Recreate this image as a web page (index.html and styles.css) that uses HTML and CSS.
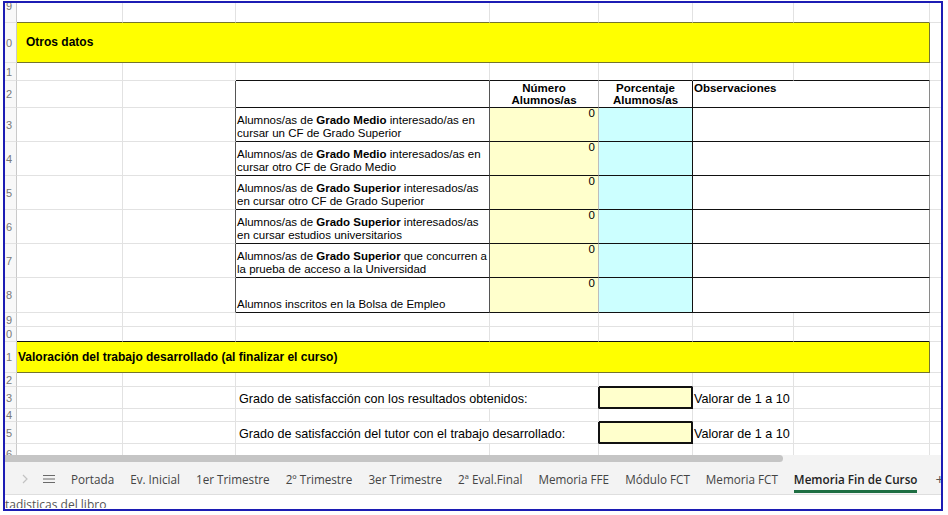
FILE: index.html
```html
<!DOCTYPE html>
<html>
<head>
    <meta charset="UTF-8">
    <title>Memoria Fin de Curso</title>
    <link rel="stylesheet" href="styles.css">
</head>
<body>
<div class="frame">
    <div class="sheet">
        <div class="row ht20">
            <div class="c h top">9</div>
            <div class="c bo"></div><div class="c bo"></div><div class="c bo"></div><div class="c bo"></div>
            <div class="c bo"></div><div class="c bo"></div><div class="c bo"></div><div class="c"></div>
        </div>
        <div class="row ht40">
            <div class="c h">0</div>
            <div class="c band one">Otros datos</div>
            <div class="c"></div>
        </div>
        <div class="row ht18">
            <div class="c h">1</div>
            <div class="c"></div><div class="c"></div><div class="c bk"></div><div class="c bk"></div>
            <div class="c bk"></div><div class="c bk"></div><div class="c bk"></div><div class="c"></div>
        </div>
        <div class="row ht27">
            <div class="c h">2</div>
            <div class="c"></div><div class="c rd"></div>
            <div class="c bk rd"></div>
            <div class="c th bk rl">Número<br>Alumnos/as</div>
            <div class="c th bk rk">Porcentaje<br>Alumnos/as</div>
            <div class="c th left s2 bk rg">Observaciones</div>
            <div class="c"></div>
        </div>
        <div class="row ht34">
            <div class="c h">3</div>
            <div class="c"></div><div class="c rd"></div>
            <div class="c t bk rd"><span>Alumnos/as de <b>Grado Medio</b> interesado/as en<br>cursar un CF de Grado Superior</span></div>
            <div class="c num bk rl">0</div>
            <div class="c pct bk rk"></div>
            <div class="c s2 bk rg"></div>
            <div class="c"></div>
        </div>
        <div class="row ht34">
            <div class="c h">4</div>
            <div class="c"></div><div class="c rd"></div>
            <div class="c t bk rd"><span>Alumnos/as de <b>Grado Medio</b> interesados/as en<br>cursar otro CF de Grado Medio</span></div>
            <div class="c num bk rl">0</div>
            <div class="c pct bk rk"></div>
            <div class="c s2 bk rg"></div>
            <div class="c"></div>
        </div>
        <div class="row ht34">
            <div class="c h">5</div>
            <div class="c"></div><div class="c rd"></div>
            <div class="c t bk rd"><span>Alumnos/as de <b>Grado Superior</b> interesados/as<br>en cursar otro CF de Grado Superior</span></div>
            <div class="c num bk rl">0</div>
            <div class="c pct bk rk"></div>
            <div class="c s2 bk rg"></div>
            <div class="c"></div>
        </div>
        <div class="row ht34">
            <div class="c h">6</div>
            <div class="c"></div><div class="c rd"></div>
            <div class="c t bk rd"><span>Alumnos/as de <b>Grado Superior</b> interesados/as<br>en cursar estudios universitarios</span></div>
            <div class="c num bk rl">0</div>
            <div class="c pct bk rk"></div>
            <div class="c s2 bk rg"></div>
            <div class="c"></div>
        </div>
        <div class="row ht34">
            <div class="c h">7</div>
            <div class="c"></div><div class="c rd"></div>
            <div class="c t bk rd"><span>Alumnos/as de <b>Grado Superior</b> que concurren a<br>la prueba de acceso a la Universidad</span></div>
            <div class="c num bk rl">0</div>
            <div class="c pct bk rk"></div>
            <div class="c s2 bk rg"></div>
            <div class="c"></div>
        </div>
        <div class="row ht35">
            <div class="c h">8</div>
            <div class="c"></div><div class="c rd"></div>
            <div class="c t bk rd"><span>Alumnos inscritos en la Bolsa de Empleo</span></div>
            <div class="c num bk rl">0</div>
            <div class="c pct bk rk"></div>
            <div class="c s2 bk rg"></div>
            <div class="c"></div>
        </div>
        <div class="row ht14">
            <div class="c h">9</div>
            <div class="c"></div><div class="c"></div><div class="c"></div><div class="c"></div>
            <div class="c"></div><div class="c"></div><div class="c"></div><div class="c"></div>
        </div>
        <div class="row ht15">
            <div class="c h">0</div>
            <div class="c bk"></div><div class="c bk"></div><div class="c bk"></div><div class="c bk"></div>
            <div class="c bk"></div><div class="c bk"></div><div class="c bk"></div><div class="c"></div>
        </div>
        <div class="row ht31">
            <div class="c h">1</div>
            <div class="c band two">Valoración del trabajo desarrollado (al finalizar el curso)</div>
            <div class="c"></div>
        </div>
        <div class="row ht14">
            <div class="c h">2</div>
            <div class="c"></div><div class="c"></div><div class="c"></div><div class="c"></div>
            <div class="c bk"></div><div class="c"></div><div class="c"></div><div class="c"></div>
        </div>
        <div class="row ht22">
            <div class="c h">3</div>
            <div class="c"></div><div class="c"></div>
            <div class="c t q s2 rk"><span>Grado de satisfacción con los resultados obtenidos:</span></div>
            <div class="c box"></div>
            <div class="c t q note"><span>Valorar de 1 a 10</span></div>
            <div class="c"></div><div class="c"></div>
        </div>
        <div class="row ht13">
            <div class="c h">4</div>
            <div class="c"></div><div class="c"></div><div class="c"></div><div class="c"></div>
            <div class="c bk"></div><div class="c"></div><div class="c"></div><div class="c"></div>
        </div>
        <div class="row ht22">
            <div class="c h">5</div>
            <div class="c"></div><div class="c"></div>
            <div class="c t q s2 rk"><span>Grado de satisfacción del tutor con el trabajo desarrollado:</span></div>
            <div class="c box"></div>
            <div class="c t q note"><span>Valorar de 1 a 10</span></div>
            <div class="c"></div><div class="c"></div>
        </div>
        <div class="row ht20">
            <div class="c h">6</div>
            <div class="c"></div><div class="c"></div><div class="c"></div><div class="c"></div>
            <div class="c"></div><div class="c"></div><div class="c"></div><div class="c"></div>
        </div>
    </div>

    <div class="hscroll"><div class="thumb"></div></div>

    <div class="tabs">
        <svg class="chev" width="6" height="10" viewBox="0 0 6 10"><path d="M1 1l4 4-4 4" fill="none" stroke="#c2c2c2" stroke-width="1.2"/></svg>
        <svg class="menu" width="12" height="10" viewBox="0 0 12 10"><path d="M0 1.5h12M0 5h12M0 8.5h12" stroke="#6a6a6a" stroke-width="1"/></svg>
        <span class="tab">Portada</span>
        <span class="tab">Ev. Inicial</span>
        <span class="tab">1er Trimestre</span>
        <span class="tab">2º Trimestre</span>
        <span class="tab">3er Trimestre</span>
        <span class="tab">2ª Eval.Final</span>
        <span class="tab">Memoria FFE</span>
        <span class="tab">Módulo FCT</span>
        <span class="tab">Memoria FCT</span>
        <span class="tab on">Memoria Fin de Curso</span>
        <span class="plus">+</span>
    </div>

    <div class="status">tadisticas del libro</div>
</div>
</body>
</html>
```

FILE: styles.css
```css
* {
    box-sizing: border-box;
}
body {
    margin: 0;
    background-color: #fff;
    font-family: "Liberation Sans", Arial, sans-serif;
}
.frame {
    margin: 1px 0 0 3px;
    width: 940px;
    height: 510px;
    border: 2px solid #1c1cb4;
    display: flex;
    flex-direction: column;
    overflow: hidden;
}

/* hoja */
.sheet {
    height: 452px;
    flex-shrink: 0;
    overflow: hidden;
    font-size: 11.5px;
    color: #000;
}
.row {
    display: grid;
    grid-template-columns: 12px 106px 113px 254px 109px 94px 101px 136px 11px;
}
.ht13 { height: 13px; }
.ht14 { height: 14px; }
.ht15 { height: 15px; }
.ht18 { height: 18px; }
.ht20 { height: 20px; }
.ht22 { height: 22px; }
.ht27 { height: 27px; }
.ht31 { height: 31px; }
.ht34 { height: 34px; }
.ht35 { height: 35px; }
.ht40 { height: 40px; }

.c {
    border-right: 1px solid #e2e2e2;
    border-bottom: 1px solid #e2e2e2;
    white-space: nowrap;
}
.c:last-child {
    border-right: none;
}
.h {
    background-color: #f8f8f8;
    border-right-color: #c9c9c9;
    color: #777;
    font-size: 11px;
    display: flex;
    align-items: center;
    padding-left: 1px;
}
.h.top {
    align-items: flex-start;
    line-height: 6px;
}
.s2 { grid-column: span 2; }

/* bordes */
.bo { border-bottom-color: #74742e; }
.bk { border-bottom-color: #111; }
.rk { border-right-color: #111; }
.rd { border-right-color: #555; }
.rl { border-right-color: #bdbdbd; }
.rg { border-right-color: #8a8a8a; }

.band {
    grid-column: span 7;
    background-color: #ffff00;
    border-right-color: #74742e;
    border-bottom-color: #74742e;
    font-weight: bold;
    font-size: 12px;
}
.band.one {
    padding-left: 9px;
    line-height: 39px;
}
.band.two {
    padding-left: 1px;
    line-height: 30px;
}

.th {
    font-weight: bold;
    line-height: 12px;
    padding-top: 1px;
    text-align: center;
}
.th.left {
    text-align: left;
    padding-left: 1px;
}
.t {
    display: grid;
    align-content: end;
    line-height: 13px;
    padding: 0 1px 1px;
}
.num {
    background-color: #ffffcc;
    text-align: right;
    line-height: 10px;
    padding-right: 3px;
}
.pct {
    background-color: #ccffff;
}
.q {
    font-size: 12.6px;
    line-height: 15px;
    padding-left: 3px;
}
.q.note {
    padding-left: 1px;
}
.box {
    background-color: #ffffcc;
    border: 2px solid #111;
    border-top-width: 1px;
    border-left-width: 1px;
}

/* barra de desplazamiento */
.hscroll {
    height: 8px;
    flex-shrink: 0;
    background-color: #f3f3f3;
}
.thumb {
    width: 778px;
    height: 7px;
    background-color: #c5c5c5;
    border-radius: 0 4px 4px 0;
}

/* pestañas */
.tabs {
    height: 32px;
    flex-shrink: 0;
    background-color: #f3f3f3;
    border-bottom: 1px solid #dedede;
    display: flex;
    align-items: center;
    gap: 16px;
    padding-left: 17px;
    font-family: "Open Sans", sans-serif;
    font-size: 11.7px;
    color: #444;
    white-space: nowrap;
}
.tabs > * {
    flex-shrink: 0;
}
.chev {
    margin-right: -1px;
}
.tab {
    height: 100%;
    display: flex;
    align-items: center;
    position: relative;
}
.tab.on {
    color: #222;
    font-weight: 600;
}
.tab.on::after {
    content: "";
    position: absolute;
    left: 0;
    right: 0;
    bottom: 1px;
    height: 3px;
    background-color: #1e6e42;
}
.plus {
    font-size: 15px;
    color: #555;
    margin-left: 2px;
}

.status {
    height: 13px;
    overflow: hidden;
    padding-top: 2px;
    font-family: "Open Sans", sans-serif;
    font-size: 12px;
    line-height: 16px;
    color: #555;
    white-space: nowrap;
}
```
